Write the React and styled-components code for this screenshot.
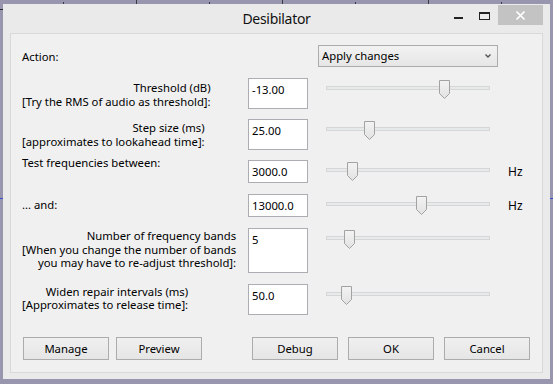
import React from 'react';
import styled, { createGlobalStyle } from 'styled-components';

const Global = createGlobalStyle`
  html, body { margin: 0; padding: 0; background: #9896ae; }
  body {
    width: 553px; height: 384px; overflow: hidden;
    font-family: "Noto Sans", "Open Sans", sans-serif;
    font-size: 11.3px; color: #000;
  }
`;

const Desktop = styled.div`
  position: relative;
  width: 553px; height: 384px; box-sizing: border-box;
  padding: 4px 3px 5px 3px;
  background: #9896ae;
  display: flex;
`;

const Backdrop = styled.svg`
  position: absolute; left: 0; top: 0;
  pointer-events: none;
`;

const Window = styled.div`
  position: relative;
  flex: 1;
  display: flex; flex-direction: column;
  background: #eaeaea;
`;

const TitleBar = styled.div`
  height: 29px;
  display: grid;
  grid-template-columns: 1fr auto 1fr;
  align-items: start;
`;

const Title = styled.div`
  grid-column: 2;
  font-size: 14px; line-height: 20px;
  letter-spacing: -0.3px;
  margin-top: 5px;
  color: #111;
`;

const Captions = styled.div`
  grid-column: 3; justify-self: end;
  display: flex;
  margin: 1px 7px 0 0;
`;

const CapButton = styled.div`
  width: ${p => p.$w}px; height: 20px;
  background: ${p => (p.$close ? '#c3c3c3' : 'transparent')};
  display: flex;
`;

const Panel = styled.div`
  flex: 1;
  margin: 0 7px 6px 7px;
  background: #f0f0f0;
  border: 1px solid #d9d9d9;
  padding: 11px 12px 12px 11px;
  display: flex; flex-direction: column;
`;

const ActionRow = styled.div`
  display: grid;
  grid-template-columns: 296px 180px;
  align-items: start;
`;

const Label = styled.div`
  justify-self: start;
  text-align: right;
  line-height: 13.5px;
  white-space: nowrap;
  margin-top: ${p => p.$mt || 0}px;
`;

const Select = styled.div`
  box-sizing: border-box;
  height: 22px;
  border: 1px solid #acacac;
  background: linear-gradient(#f2f2f2, #e6e6e6);
  padding: 0 6px 0 3px;
  display: flex; align-items: center; justify-content: space-between;
  line-height: 16px;
`;

const ParamRow = styled.div`
  display: grid;
  grid-template-columns: 226px 60px 182px 1fr;
  align-items: start;
  margin-top: ${p => p.$mt}px;
`;

const Field = styled.div`
  box-sizing: border-box;
  width: 60px; height: ${p => p.$h}px;
  background: #fff;
  border: 1px solid #abadb3;
  padding: 3px 3px 0;
  line-height: 15px;
`;

const Slider = styled.div`
  position: relative;
  width: 164px; height: 20px;
  margin-left: 18px;
`;

const Track = styled.div`
  box-sizing: border-box;
  margin-top: 8px;
  height: 4px;
  background: #e7eaea;
  border: 1px solid #d6d6d6;
`;

const ThumbSvg = styled.svg`
  position: absolute; top: 2px;
  width: 11px; height: 19px;
`;

const Unit = styled.div`
  padding-left: 18px;
  line-height: 14px;
  margin-top: 5px;
  font-size: 12px;
`;

const ButtonRow = styled.div`
  display: flex; justify-content: space-between;
  margin: 22px 0 0 1px;
`;

const Group = styled.div`
  display: flex; gap: ${p => p.$gap}px;
`;

const Button = styled.div`
  box-sizing: border-box;
  width: 86px; height: 23px;
  border: 1px solid #acacac;
  background: linear-gradient(#f0f0f0, #e5e5e5);
  text-align: center;
  line-height: 21px;
`;

const Thumb = ({ left }) => (
  <ThumbSvg viewBox="0 0 11 19" style={{ left }}>
    <defs>
      <linearGradient id="tg" x1="0" y1="0" x2="0" y2="1">
        <stop offset="0" stopColor="#f3f3f3" />
        <stop offset="1" stopColor="#e2e2e2" />
      </linearGradient>
    </defs>
    <path d="M0.5 0.5 H10.5 V13.5 L5.5 18.5 L0.5 13.5 Z" fill="url(#tg)" stroke="#a2a2a2" />
  </ThumbSvg>
);

const rows = [
  { lines: ['Threshold (dB)', '[Try the RMS of audio as threshold]:'], value: '-13.00', h: 31, mt: 11, lmt: 3, pos: 113 },
  { lines: ['Step size (ms)', '[approximates to lookahead time]:'], value: '25.00', h: 31, mt: 10, lmt: 2, pos: 38 },
  { lines: ['Test frequencies between:'], value: '3000.0', h: 23, mt: 10, lmt: -4, pos: 21, unit: 'Hz' },
  { lines: ['... and:'], value: '13000.0', h: 23, mt: 11, lmt: 4, pos: 90, unit: 'Hz' },
  {
    lines: ['Number of frequency bands', '[When you change the number of bands', 'you may have to re-adjust threshold]:'],
    value: '5', h: 45, mt: 11, lmt: 1, pos: 18,
  },
  { lines: ['Widen repair intervals (ms)', '[Approximates to release time]:'], value: '50.0', h: 31, mt: 11, lmt: 0.5, pos: 15 },
];

const ticks = [63, 136, 209, 282, 355, 428, 501];

export default function App() {
  return (
    <>
      <Global />
      <Desktop>
        <Backdrop width="553" height="384" viewBox="0 0 553 384">
          {ticks.map((x, i) => (
            <rect key={x} x={x} y={i % 2 ? 0 : 2} width="1" height={i % 2 ? 4 : 2} fill="#3a3a44" />
          ))}
          <rect x="0" y="9" width="3" height="1" fill="#2a2a30" />
          <rect x="0" y="198" width="3" height="1" fill="#3a4fd0" />
          <rect x="550" y="198" width="3" height="1" fill="#3a4fd0" />
        </Backdrop>
        <Window>
          <TitleBar>
            <Title>Desibilator</Title>
            <Captions>
              <CapButton $w={26}>
                <svg width="26" height="20" viewBox="0 0 26 20">
                  <rect x="9" y="12" width="9" height="2" fill="#222" />
                </svg>
              </CapButton>
              <CapButton $w={27}>
                <svg width="27" height="20" viewBox="0 0 27 20">
                  <rect x="8.5" y="7.5" width="10" height="7" fill="none" stroke="#222" />
                  <rect x="8" y="7" width="11" height="2" fill="#222" />
                </svg>
              </CapButton>
              <CapButton $w={45} $close>
                <svg width="45" height="20" viewBox="0 0 45 20">
                  <path d="M18.5 6.5 L26.5 14.5 M26.5 6.5 L18.5 14.5" stroke="#fff" strokeWidth="1.7" />
                </svg>
              </CapButton>
            </Captions>
          </TitleBar>
          <Panel>
            <ActionRow>
              <Label $mt={5}>Action:</Label>
              <Select>
                <span>Apply changes</span>
                <svg width="6" height="4" viewBox="0 0 6 4">
                  <path d="M0.5 0.5 L3 3 L5.5 0.5" fill="none" stroke="#555" strokeWidth="1.4" />
                </svg>
              </Select>
            </ActionRow>
            {rows.map((r) => (
              <ParamRow key={r.value} $mt={r.mt}>
                <Label $mt={r.lmt}>
                  {r.lines.map((l, i) => (
                    <div key={i}>{l}</div>
                  ))}
                </Label>
                <Field $h={r.h}>{r.value}</Field>
                <Slider>
                  <Track />
                  <Thumb left={r.pos} />
                </Slider>
                {r.unit ? <Unit>{r.unit}</Unit> : <span />}
              </ParamRow>
            ))}
            <ButtonRow>
              <Group $gap={7}>
                <Button>Manage</Button>
                <Button>Preview</Button>
              </Group>
              <Group $gap={10}>
                <Button>Debug</Button>
                <Button>OK</Button>
                <Button>Cancel</Button>
              </Group>
            </ButtonRow>
          </Panel>
        </Window>
      </Desktop>
    </>
  );
}
